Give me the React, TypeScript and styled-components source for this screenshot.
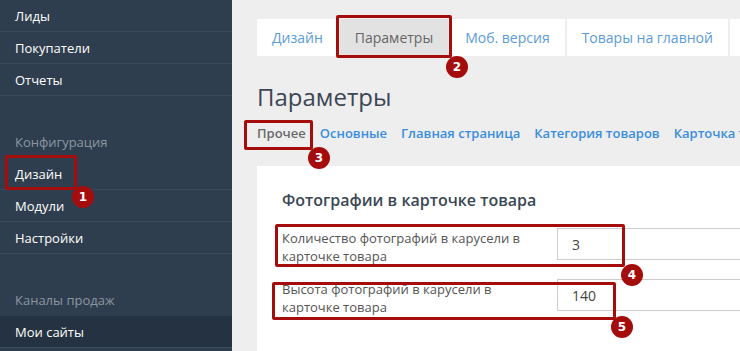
import React, {FC} from 'react';
import styled, {createGlobalStyle} from 'styled-components';

const GlobalStyle = createGlobalStyle`
  html, body {
    margin: 0;
    padding: 0;
    overflow: hidden;
    background: #eeeeee;
  }
  * {
    box-sizing: border-box;
  }
  body {
    font-family: "Open Sans", "Liberation Sans", sans-serif;
  }
`;

const Page = styled.div`
  position: relative;
  display: flex;
  width: 740px;
  height: 351px;
  overflow: hidden;
`;

const Sidebar = styled.div`
  width: 232px;
  flex-shrink: 0;
  background: #2f3e4e;
  display: flex;
  flex-direction: column;
`;

const NavItem = styled.div<{$active?: boolean}>`
  height: 32px;
  display: flex;
  align-items: center;
  padding-left: 15px;
  font-size: 13px;
  color: #ffffff;
  border-bottom: 1px solid #3a4a5a;
  background: ${p => (p.$active ? '#253241' : 'transparent')};
`;

const NavHeader = styled.div`
  height: 62px;
  display: flex;
  align-items: flex-end;
  padding: 0 0 7px 15px;
  font-size: 13px;
  color: #8b96a1;
`;

const Main = styled.div`
  flex: 1;
  padding-left: 25px;
  display: flex;
  flex-direction: column;
  min-width: 0;
`;

const Tabs = styled.div`
  display: flex;
  gap: 2px;
  margin-top: 19px;
  white-space: nowrap;
`;

const Tab = styled.div<{$active?: boolean}>`
  height: 37px;
  display: flex;
  align-items: center;
  padding: 0 15px;
  font-size: 14px;
  background: ${p => (p.$active ? '#e2e2e2' : '#ffffff')};
  color: ${p => (p.$active ? '#666666' : '#5b9bd8')};
`;

const Title = styled.h1`
  margin: 26px 0 0;
  font-size: 24px;
  font-weight: 400;
  line-height: 30px;
  color: #3b4754;
`;

const SubTabs = styled.div`
  display: flex;
  gap: 14px;
  margin-top: 12px;
  white-space: nowrap;
`;

const SubTab = styled.div<{$active?: boolean}>`
  font-size: 13px;
  font-weight: 600;
  line-height: 18px;
  color: ${p => (p.$active ? '#6a6a6a' : '#3a8ddd')};
`;

const Panel = styled.div`
  flex: 1;
  margin-top: 24px;
  background: #ffffff;
  padding: 23px 0 0 25px;
`;

const PanelTitle = styled.div`
  font-size: 16px;
  font-weight: 600;
  line-height: 22px;
  color: #3b4754;
  margin-bottom: 17px;
`;

const Form = styled.div`
  display: flex;
  flex-direction: column;
  gap: 14px;
`;

const Row = styled.div`
  display: flex;
  align-items: flex-start;
`;

const Label = styled.div`
  width: 275px;
  flex-shrink: 0;
  padding-top: 2px;
  padding-right: 20px;
  font-size: 13px;
  line-height: 17.5px;
  color: #555555;
`;

const Input = styled.div`
  flex: 1;
  height: 32px;
  border: 1px solid #cccccc;
  border-right: none;
  display: flex;
  align-items: center;
  padding-left: 14px;
  font-size: 14px;
  color: #444444;
`;

const Frame = styled.div`
  position: absolute;
  border: 3px solid #a50d0d;
  border-radius: 2px;
  pointer-events: none;
`;

const Badge = styled.div`
  position: absolute;
  width: 22px;
  height: 22px;
  margin: -11px 0 0 -11px;
  border-radius: 50%;
  background: #a50d0d;
  color: #ffffff;
  font-family: "DejaVu Sans", "Liberation Sans", sans-serif;
  font-size: 12px;
  font-weight: 700;
  display: flex;
  align-items: center;
  justify-content: center;
`;

interface MarkProps {
  n: number;
  x: number;
  y: number;
  w: number;
  h: number;
  bx: number;
  by: number;
}

const Mark: FC<MarkProps> = ({n, x, y, w, h, bx, by}) => (
  <>
    <Frame style={{left: x, top: y, width: w, height: h}} />
    <Badge style={{left: bx, top: by}}>{n}</Badge>
  </>
);

const marks: MarkProps[] = [
  {n: 1, x: 5, y: 155, w: 72, h: 35, bx: 83, by: 197},
  {n: 2, x: 336, y: 15, w: 116, h: 43, bx: 457, by: 67},
  {n: 3, x: 244, y: 120, w: 69, h: 30, bx: 319, by: 158},
  {n: 4, x: 275, y: 224, w: 350, h: 43, bx: 632, by: 275},
  {n: 5, x: 272, y: 282, w: 344, h: 38, bx: 622, by: 327},
];

const App: FC = () => (
  <>
    <GlobalStyle />
    <Page>
      <Sidebar>
        <NavItem>Лиды</NavItem>
        <NavItem>Покупатели</NavItem>
        <NavItem>Отчеты</NavItem>
        <NavHeader>Конфигурация</NavHeader>
        <NavItem>Дизайн</NavItem>
        <NavItem>Модули</NavItem>
        <NavItem>Настройки</NavItem>
        <NavHeader>Каналы продаж</NavHeader>
        <NavItem $active>Мои сайты</NavItem>
      </Sidebar>
      <Main>
        <Tabs>
          <Tab>Дизайн</Tab>
          <Tab $active>Параметры</Tab>
          <Tab>Моб. версия</Tab>
          <Tab>Товары на главной</Tab>
          <Tab>Отзывы</Tab>
        </Tabs>
        <Title>Параметры</Title>
        <SubTabs>
          <SubTab $active>Прочее</SubTab>
          <SubTab>Основные</SubTab>
          <SubTab>Главная страница</SubTab>
          <SubTab>Категория товаров</SubTab>
          <SubTab>Карточка товара</SubTab>
        </SubTabs>
        <Panel>
          <PanelTitle>Фотографии в карточке товара</PanelTitle>
          <Form>
            <Row>
              <Label>Количество фотографий в карусели в карточке товара</Label>
              <Input>3</Input>
            </Row>
            <Row>
              <Label>Высота фотографий в карусели в карточке товара</Label>
              <Input>140</Input>
            </Row>
          </Form>
        </Panel>
      </Main>
      {marks.map(m => (
        <Mark key={m.n} {...m} />
      ))}
    </Page>
  </>
);

export default App;
